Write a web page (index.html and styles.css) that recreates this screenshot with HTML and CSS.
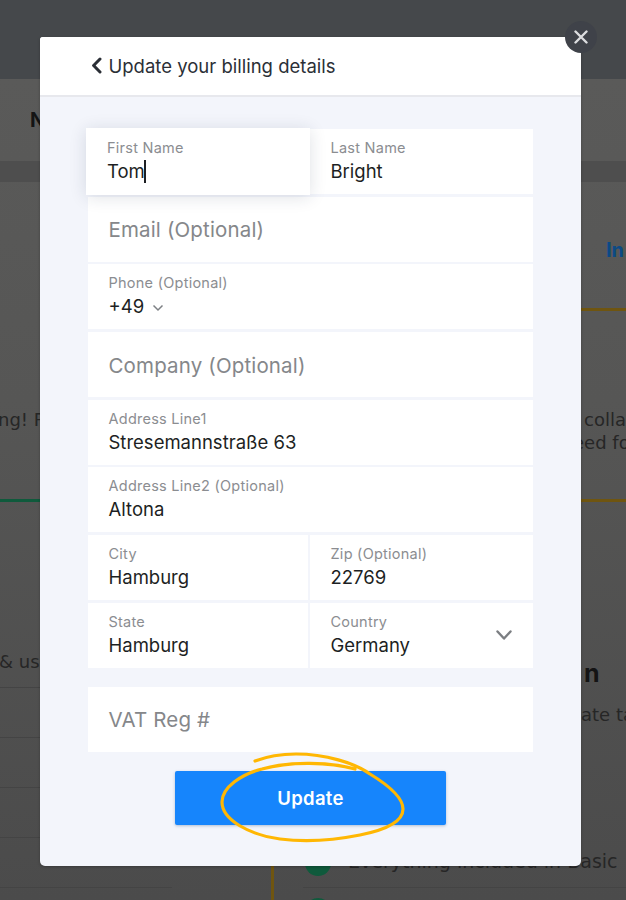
FILE: index.html
```html
<!DOCTYPE html>
<html lang="en">
<head>
<meta charset="utf-8">
<title>Update your billing details</title>
<link rel="stylesheet" href="styles.css">
</head>
<body>
<div class="backdrop">
  <div class="bg-hero"></div>
  <div class="bg-band"></div>
  <div class="bg-item bg-n">N</div>
  <div class="bg-item bg-in">In</div>
  <div class="bg-item bg-text bg-ng">ng! P</div>
  <div class="bg-item bg-text bg-colla">colla</div>
  <div class="bg-item bg-text bg-eedfo">eed fo</div>
  <div class="bg-line bg-green"></div>
  <div class="bg-line bg-gold1"></div>
  <div class="bg-line bg-gold2"></div>
  <div class="bg-item bg-text bg-use">&amp; use</div>
  <div class="bg-rule r1"></div>
  <div class="bg-rule r2"></div>
  <div class="bg-rule r3"></div>
  <div class="bg-rule r4"></div>
  <div class="bg-rule r5"></div>
  <div class="bg-item bg-on">n</div>
  <div class="bg-item bg-text bg-ate">ate ta</div>
  <div class="bg-vline"></div>
  <div class="bg-check"></div>
  <div class="bg-check c2"></div>
  <div class="bg-item bg-text bg-every">Everything included in Basic</div>
  <div class="bg-rule r6"></div>
</div>

<div class="modal">
  <button class="close" aria-label="Close">
    <svg width="14" height="14" viewBox="0 0 14 14"><path d="M1.5 1.5l11 11M12.5 1.5l-11 11" stroke="#dcdddf" stroke-width="2.4" stroke-linecap="round" fill="none"/></svg>
  </button>
  <header class="modal-head">
    <svg class="back" width="11" height="17" viewBox="0 0 11 17"><path d="M9 2L2.6 8.5 9 15" stroke="#2b2f36" stroke-width="3" stroke-linecap="round" stroke-linejoin="round" fill="none"/></svg>
    <h1 class="title">Update your billing details</h1>
  </header>
  <form class="modal-body">
    <div class="fields">
      <div class="row split">
        <div class="field focused"><span class="label">First Name</span><span class="value">Tom<i class="caret"></i></span></div>
        <div class="field"><span class="label">Last Name</span><span class="value">Bright</span></div>
      </div>
      <div class="row"><div class="field empty">Email (Optional)</div></div>
      <div class="row"><div class="field"><span class="label">Phone (Optional)</span><span class="value">+49<svg class="chev-small" width="12" height="8" viewBox="0 0 12 8"><path d="M1.5 1.5L6 6l4.5-4.5" stroke="#7d8084" stroke-width="1.5" fill="none"/></svg></span></div></div>
      <div class="row"><div class="field empty">Company (Optional)</div></div>
      <div class="row"><div class="field"><span class="label">Address Line1</span><span class="value">Stresemannstraße 63</span></div></div>
      <div class="row"><div class="field"><span class="label">Address Line2 (Optional)</span><span class="value">Altona</span></div></div>
      <div class="row split">
        <div class="field"><span class="label">City</span><span class="value">Hamburg</span></div>
        <div class="field"><span class="label">Zip (Optional)</span><span class="value">22769</span></div>
      </div>
      <div class="row split">
        <div class="field"><span class="label">State</span><span class="value">Hamburg</span></div>
        <div class="field"><span class="label">Country</span><span class="value">Germany</span>
          <svg class="chev" width="16" height="11" viewBox="0 0 16 11"><path d="M1.5 1.5L8 8.5l6.5-7" stroke="#7b7e82" stroke-width="2.4" stroke-linecap="round" stroke-linejoin="round" fill="none"/></svg>
        </div>
      </div>
    </div>
    <div class="row vat"><div class="field empty">VAT Reg #</div></div>
    <div class="actions">
      <button type="button" class="update">Update</button>
      <svg class="scribble" width="190" height="95" viewBox="0 0 190 95"><path d="M35 9C48 4 62 2 76 2C105 2 135 11 150 22C168 33 183 46 183 57C183 70 165 78 140 83C115 88 85 90 60 87C30 83 2 68 2 50C2 35 22 22 42 17C70 9 110 10 135 17" stroke="#ffb703" stroke-width="3.2" stroke-linecap="round" fill="none"/></svg>
    </div>
  </form>
</div>
</body>
</html>
```

FILE: styles.css
```css
* { box-sizing: border-box; }
html, body { margin: 0; height: 100%; }
body {
  width: 626px;
  height: 900px;
  position: relative;
  overflow: hidden;
  background: linear-gradient(#5a5a59 79px, #565655 400px, #4b4b4b 900px);
  font-family: Inter, "Liberation Sans", sans-serif;
}

.backdrop { position: absolute; inset: 0; overflow: hidden; }
.bg-hero { position: absolute; left: 0; top: 0; width: 626px; height: 79px; background: #45484b; }
.bg-band { position: absolute; left: 0; top: 161px; width: 626px; height: 21px; background: #4e4e4e; }
.bg-item { position: absolute; white-space: nowrap; }
.bg-n { left: 30px; top: 108px; font-size: 20px; font-weight: 700; color: #141414; }
.bg-in { left: 606px; top: 238px; font-size: 20px; font-weight: 700; color: #0b4a85; }
.bg-text { font-family: "DejaVu Sans", sans-serif; font-size: 18px; color: #262626; }
.bg-ng { left: -2px; top: 409px; }
.bg-colla { left: 584px; top: 409px; }
.bg-eedfo { left: 573px; top: 432px; }
.bg-use { left: -1px; top: 651px; }
.bg-line { position: absolute; height: 3px; }
.bg-green { left: 0; top: 499px; width: 40px; background: #0f5a3c; }
.bg-gold1 { left: 581px; top: 308px; width: 45px; background: #6f5510; }
.bg-gold2 { left: 581px; top: 499px; width: 45px; background: #6f5510; }
.bg-rule { position: absolute; height: 1px; background: #444; }
.r1 { left: 0; top: 687px; width: 40px; }
.r2 { left: 0; top: 737px; width: 40px; }
.r3 { left: 0; top: 787px; width: 40px; }
.r4 { left: 0; top: 837px; width: 40px; }
.r5 { left: 0; top: 887px; width: 172px; }
.r6 { left: 303px; top: 887px; width: 323px; }
.bg-on { left: 584px; top: 658px; font-size: 25px; font-weight: 700; color: #141414; }
.bg-ate { left: 581px; top: 704px; }
.bg-vline { position: absolute; left: 271px; top: 866px; width: 3px; height: 34px; background: #6f5510; }
.bg-check { position: absolute; left: 305px; top: 850px; width: 26px; height: 26px; border-radius: 50%; background: #0f5a3c; }
.bg-check.c2 { top: 898px; }
.bg-every { left: 348px; top: 850px; font-size: 19px; }

.modal {
  position: absolute;
  left: 40px;
  top: 37px;
  width: 541px;
  height: 829px;
  border-radius: 3px 3px 5px 5px;
  background: #f3f5fb;
  box-shadow: 0 1px 3px rgba(0,0,0,.25);
  display: flex;
  flex-direction: column;
}
.close {
  position: absolute;
  left: 525px;
  top: -16px;
  width: 32px;
  height: 32px;
  border: 0;
  padding: 0;
  border-radius: 50%;
  background: #3f4249;
  display: flex;
  align-items: center;
  justify-content: center;
}
.modal-head {
  height: 60px;
  flex: none;
  background: #fff;
  border-bottom: 2px solid #e7e8ed;
  border-radius: 3px 3px 0 0;
  display: flex;
  align-items: center;
  gap: 6.5px;
  padding: 0 0 1px 51px;
}
.back { flex: none; }
.title { margin: 0; font-size: 18.5px; font-weight: 400; color: #2b2f36; }

.modal-body { padding: 32px 48px 0; display: flex; flex-direction: column; }
.fields { display: flex; flex-direction: column; gap: 2.7px; }
.row { height: 65px; display: flex; }
.split { display: grid; grid-template-columns: 220px 223px; gap: 2px; }
.field {
  flex: 1 1 0;
  min-width: 0;
  background: #fff;
  position: relative;
  padding: 10px 20.5px 0;
  display: flex;
  flex-direction: column;
}
.label { font-size: 14.5px; line-height: 18px; letter-spacing: .25px; color: #8b8d91; }
.value { font-size: 18.5px; line-height: 24px; margin-top: 2px; color: #1d1f23; display: flex; align-items: center; }
.empty { justify-content: center; padding-top: 1px; font-size: 20.5px; letter-spacing: .15px; color: #85878a; }
.focused {
  margin: -1px -2px -1px -2px;
  padding: 11px 21px 0;
  box-shadow: 0 2px 16px rgba(30,40,70,.14);
  z-index: 1;
}
.caret { display: inline-block; width: 2px; height: 23px; margin-left: -1px; background: #1d1f23; }
.chev-small { margin-left: 8px; margin-top: 3px; }
.chev { position: absolute; right: 21px; top: 27px; }
.vat { margin-top: 19px; }
.actions { position: relative; margin-top: 19px; display: flex; justify-content: center; }
.update {
  width: 271px;
  height: 54px;
  border: 0;
  padding: 1px 0 0;
  border-radius: 2px;
  background: #1685fc;
  color: #fff;
  font-family: Inter, "Liberation Sans", sans-serif;
  font-size: 18.5px;
  font-weight: 600;
  letter-spacing: .3px;
  box-shadow: 0 1px 3px rgba(20,60,120,.3);
}
.scribble { position: absolute; left: 132px; top: -19px; pointer-events: none; }
```
